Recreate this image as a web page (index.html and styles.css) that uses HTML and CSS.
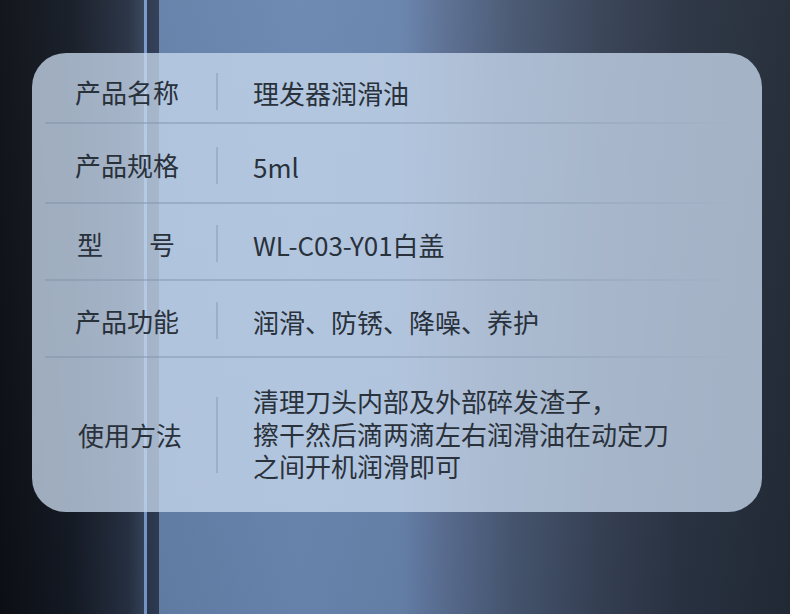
FILE: index.html
```html
<!DOCTYPE html>
<html lang="zh-CN">
<head>
  <meta charset="UTF-8" />
  <meta name="viewport" content="width=device-width, initial-scale=1.0" />
  <title>理发器润滑油</title>
  <link rel="stylesheet" href="styles.css">
</head>
<body>
  <section class="spec-card">
    <div class="spec-row r1">
      <div class="label">产品名称</div>
      <div class="sep"></div>
      <div class="value">理发器润滑油</div>
    </div>
    <div class="spec-row r2">
      <div class="label">产品规格</div>
      <div class="sep"></div>
      <div class="value">5ml</div>
    </div>
    <div class="spec-row r3">
      <div class="label label-wide">型号</div>
      <div class="sep"></div>
      <div class="value">WL-C03-Y01白盖</div>
    </div>
    <div class="spec-row r4">
      <div class="label">产品功能</div>
      <div class="sep"></div>
      <div class="value">润滑、防锈、降噪、养护</div>
    </div>
    <div class="spec-row r5">
      <div class="label label-shift">使用方法</div>
      <div class="sep sep-tall"></div>
      <div class="value value-multi">
        <div class="line">清理刀头内部及外部碎发渣子，</div>
        <div class="line">擦干然后滴两滴左右润滑油在动定刀</div>
        <div class="line">之间开机润滑即可</div>
      </div>
    </div>
  </section>
</body>
</html>
```

FILE: styles.css
```css
html, body {
  margin: 0;
  height: 614px;
  overflow: hidden;
}
body {
  font-family: "Noto Sans CJK SC", "Noto Sans", sans-serif;
  color: #29313b;
  background:
    linear-gradient(180deg, rgba(255,255,255,0.03), rgba(0,0,0,0.04)),
    linear-gradient(90deg,
      #0c0f15 0px, #141a24 70px, #263042 128px, #34425a 144px,
      #7799cb 144px, #7799cb 147px,
      #2b374d 147px, #2f3c54 159px,
      #6380a9 159px, #6a87b1 300px, #6783ac 400px, #5a6e92 445px,
      #475772 510px, #364155 600px, #2a3343 680px, #222a36 790px);
  padding-top: 53px;
  box-sizing: border-box;
}
.spec-card {
  margin: 0 28px 0 32px;
  height: 459px;
  box-sizing: border-box;
  padding-top: 4px;
  border-radius: 34px;
  background: rgba(198, 215, 236, 0.78);
  display: flex;
  flex-direction: column;
}
.spec-row {
  margin: 0 22px 0 13px;
  padding: 4px 0 0 30px;
  box-sizing: border-box;
  display: grid;
  grid-template-columns: 141px 2px 1fr;
  align-items: center;
  border-bottom: 2px solid transparent;
  border-image: linear-gradient(90deg, rgba(128,148,172,0.5), rgba(128,148,172,0.4) 70%, rgba(128,148,172,0)) 1;
}
.r1 { height: 67px; }
.r2 { height: 80px; }
.r3 { height: 77px; }
.r4 { height: 77px; }
.r5 {
  flex: 1;
  padding-top: 0;
  border-bottom: none;
  border-image: none;
}
.label {
  font-size: 26px;
  line-height: 32px;
  white-space: nowrap;
}
.label-wide {
  width: 98px;
  margin-left: 2px;
  text-align: justify;
  text-align-last: justify;
}
.label-shift {
  margin-left: 3px;
}
.sep {
  width: 2px;
  height: 37px;
  background: rgba(130, 150, 172, 0.45);
}
.sep-tall {
  height: 76px;
}
.value {
  padding: 3px 0 0 35px;
  font-size: 26px;
  line-height: 32px;
  white-space: nowrap;
}
.value-multi {
  padding-top: 0;
  margin-top: -2px;
}
.line {
  height: 32.5px;
  line-height: 32.5px;
}
```
